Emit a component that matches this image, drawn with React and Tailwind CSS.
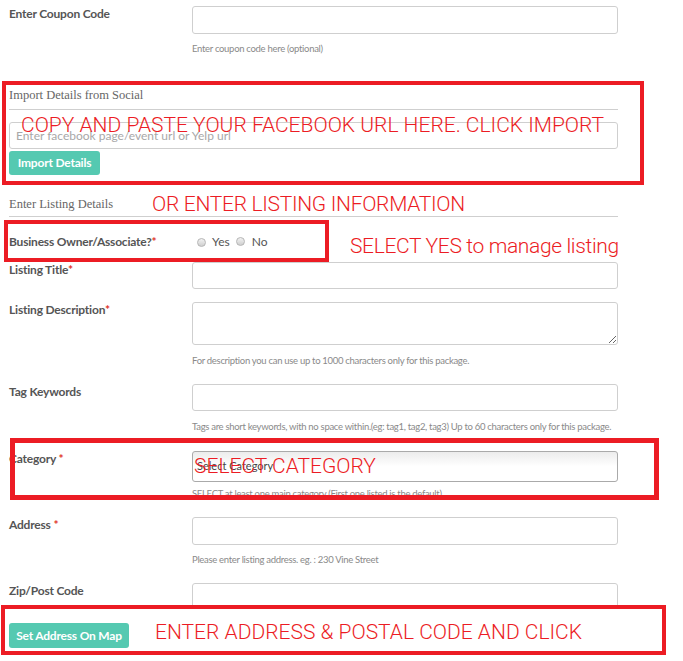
import React from "react";

const lato = { fontFamily: "Lato, 'Open Sans', sans-serif" };
const serif = { fontFamily: "'Liberation Serif', 'DejaVu Serif', serif" };
const note = { fontFamily: "Roboto, 'Liberation Sans', sans-serif" };

function Req() {
  return <span className="text-[#e0322a]">*</span>;
}

function Label({ children }) {
  return (
    <div className="text-[12px] leading-[16px] font-bold text-[#555] tracking-[-0.2px]">
      {children}
    </div>
  );
}

function Help({ children, className = "" }) {
  return (
    <div className={`whitespace-nowrap text-[9.5px] leading-[12px] text-[#8a8a8a] tracking-[-0.3px] ${className}`}>
      {children}
    </div>
  );
}

function TextInput({ h = "h-[28px]" }) {
  return (
    <div className={`w-[426px] ${h} rounded-[3px] border border-[#cfcfcf] bg-white`} />
  );
}

function Radio() {
  return (
    <span className="inline-block w-[9px] h-[9px] rounded-full border border-[#b5b5b5] bg-gradient-to-b from-[#f2f2f2] to-[#cfcfcf]" />
  );
}

function Row({ label, children, className = "" }) {
  return (
    <div className={`grid grid-cols-[183px_426px] ${className}`}>
      <Label>{label}</Label>
      <div>{children}</div>
    </div>
  );
}

function Box({ className }) {
  return <div className={`absolute pointer-events-none border-[#ec1c24] ${className}`} />;
}

function Note({ className, children }) {
  return (
    <div
      style={note}
      className={`absolute pointer-events-none whitespace-nowrap text-[21px] leading-[21px] font-light text-[#ec1c24] ${className}`}
    >
      {children}
    </div>
  );
}

export default function App() {
  return (
    <div style={lato} className="relative w-[683px] h-[661px] bg-white overflow-hidden">
      <div className="pl-[9px] pt-[6px]">
        <Row label="Enter Coupon Code">
          <TextInput />
          <Help className="mt-[9px]">Enter coupon code here (optional)</Help>
        </Row>

        {/* social import */}
        <div className="w-[609px] mt-[33px]">
          <div
            style={serif}
            className="text-[12.5px] leading-[14px] text-[#666] pb-[7px] border-b border-[#cfcfcf]"
          >
            Import Details from Social
          </div>
          <div className="mt-[12px] h-[27px] rounded-[3px] border border-[#cfcfcf] flex items-center px-[6px] text-[12px] text-[#a8a8a8]">
            Enter facebook page/event url or Yelp url
          </div>
          <button className="mt-[2px] w-[91px] h-[24px] rounded-[3px] bg-[#55c9b1] text-white text-[12px] font-bold tracking-[-0.2px] flex items-center justify-center">
            Import Details
          </button>
        </div>

        {/* listing details */}
        <div className="w-[609px] mt-[22px]">
          <div
            style={serif}
            className="text-[12.5px] leading-[14px] text-[#666] pb-[5px] border-b border-[#cfcfcf]"
          >
            Enter Listing Details
          </div>
        </div>

        <div className="mt-[17px] flex items-center h-[16px]">
          <div className="w-[188px]">
            <Label>
              Business Owner/Associate?<Req />
            </Label>
          </div>
          <div className="flex items-center text-[12px] text-[#555]">
            <Radio />
            <span className="ml-[6px]">Yes</span>
            <span className="ml-[6px]"><Radio /></span>
            <span className="ml-[7px]">No</span>
          </div>
        </div>

        <Row label={<>Listing Title<Req /></>} className="mt-[12px]">
          <TextInput h="h-[27px]" />
        </Row>

        <Row label={<>Listing Description<Req /></>} className="mt-[13px]">
          <textarea className="block w-[426px] h-[43px] rounded-[3px] border border-[#cfcfcf] bg-white outline-none" />
          <Help className="mt-[10px]">
            For description you can use up to 1000 characters only for this package.
          </Help>
        </Row>

        <Row label="Tag Keywords" className="mt-[17px]">
          <TextInput h="h-[27px]" />
          <Help className="mt-[10px]">
            Tags are short keywords, with no space within.(eg: tag1, tag2, tag3) Up to 60 characters only for this package.
          </Help>
        </Row>

        <Row label={<>Category <Req /></>} className="mt-[18px]">
          <div className="w-[426px] h-[31px] rounded-[3px] border border-[#aaaaaa] bg-gradient-to-b from-[#ececec] via-white to-white flex items-center px-[4px] text-[11px] text-[#444]">
            Select Category
          </div>
          <Help className="mt-[6px]">
            SELECT at least one main category (First one listed is the default)
          </Help>
        </Row>

        <Row label={<>Address <Req /></>} className="mt-[17px]">
          <TextInput />
          <Help className="mt-[9px]">Please enter listing address. eg. : 230 Vine Street</Help>
        </Row>

        <Row label="Zip/Post Code" className="mt-[17px]">
          <TextInput />
        </Row>

        <button className="relative z-10 mt-[12px] w-[120px] h-[25px] rounded-[3px] bg-[#55c9b1] text-white text-[12px] font-bold tracking-[-0.2px] flex items-center justify-center">
          Set Address On Map
        </button>
      </div>

      {/* annotation frames */}
      <Box className="left-[2px] top-[81px] w-[642px] h-[104px] border-[4px]" />
      <Box className="left-[4px] top-[220px] w-[325px] h-[42px] border-[4px]" />
      <Box className="left-[10px] top-[438px] w-[649px] h-[62px] border-[5px]" />
      <Box className="left-[1px] top-[605px] w-[665px] h-[50px] border-[4px] bg-white" />

      <Note className="left-[21px] top-[115px]">
        COPY AND PASTE YOUR FACEBOOK URL HERE. CLICK IMPORT
      </Note>
      <Note className="left-[152px] top-[194px] tracking-[-0.3px]">OR ENTER LISTING INFORMATION</Note>
      <Note className="left-[350px] top-[236px] tracking-[-0.35px]">SELECT YES to manage listing</Note>
      <Note className="left-[194px] top-[456px]">SELECT CATEGORY</Note>
      <Note className="left-[155px] top-[622px] z-20">
        ENTER ADDRESS &amp; POSTAL CODE AND CLICK
      </Note>
    </div>
  );
}
